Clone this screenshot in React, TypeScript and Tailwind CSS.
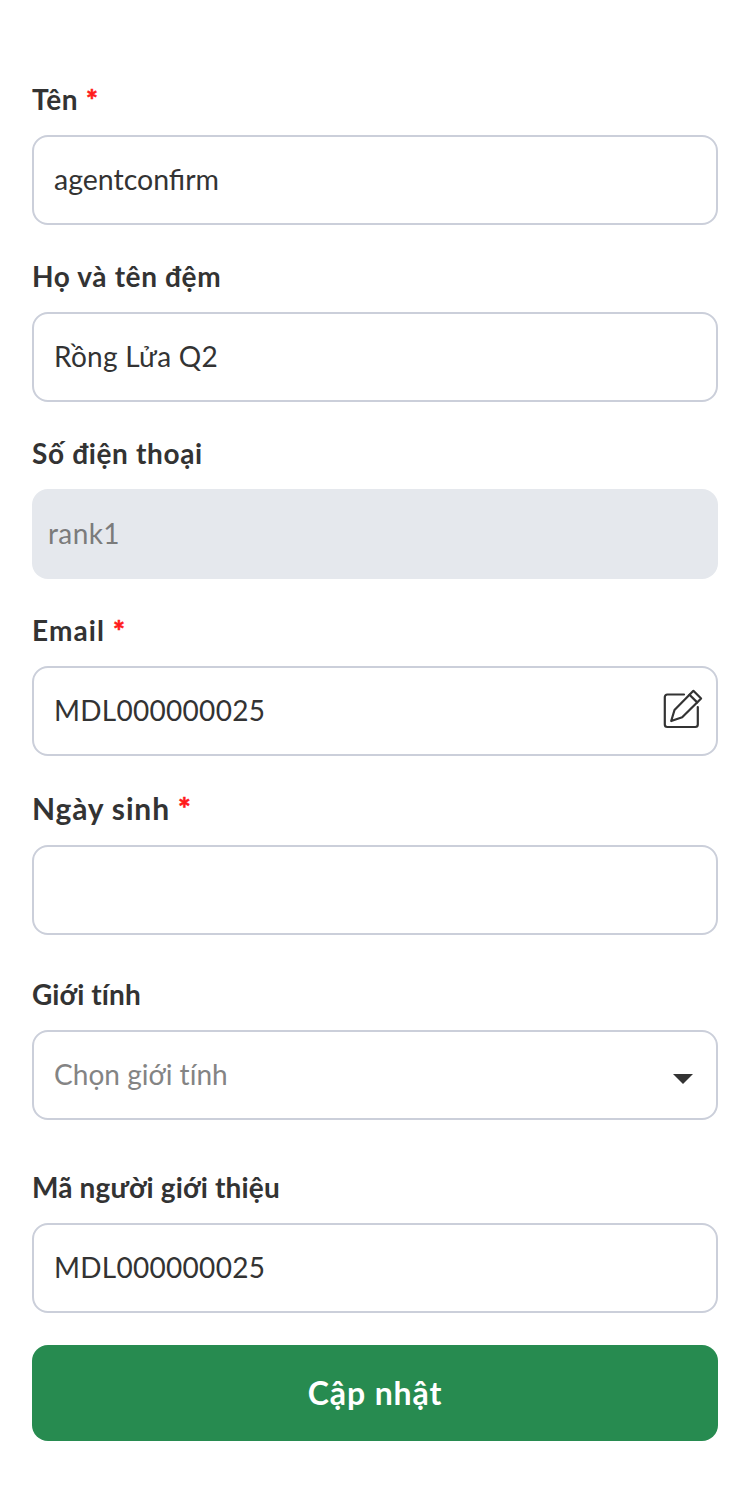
import type { ReactNode } from "react";

const box = "flex h-[90px] w-full items-center rounded-[16px] border-2 border-[#cbcfda] bg-white pb-[2px] pl-5 text-[28px] text-[#333333]";

function Label({ children, className = "text-[28px]", required = false }: { children: ReactNode; className?: string; required?: boolean }) {
  return (
    <label className={`mb-4 flex h-[38px] items-center gap-2 pb-[2px] font-bold whitespace-pre text-[#333333] ${className}`}>
      <span>{children}</span>
      {required && <span className="font-black tracking-normal text-[#ff1a1a] [-webkit-text-stroke:0.5px_#ff1a1a]">*</span>}
    </label>
  );
}

function EditIcon() {
  return (
    <svg width="40" height="40" viewBox="0 0 40 40" fill="none" stroke="#333333" strokeWidth="2.2" strokeLinejoin="round" strokeLinecap="round">
      <path d="M21 5.5H4.3a2.5 2.5 0 0 0-2.5 2.5V35.5a2.5 2.5 0 0 0 2.5 2.5h28a2.5 2.5 0 0 0 2.5-2.5V18" />
      <path d="M8.2 32l3.3-11L30.4 1.8l7.7 7.7L19.2 28.2 8.2 32Z" />
      <path d="M26.5 5.7l7.7 7.7" />
    </svg>
  );
}

export default function App() {
  return (
    <form className="flex min-h-[1505px] w-full flex-col bg-white px-8 pt-[81px] font-['Lato','Noto_Sans',sans-serif]">
      <div>
        <Label required className="text-[28px] tracking-[0.4px]">Tên</Label>
        <div className={box}><span className="text-[28.5px]">agentconfirm</span></div>
      </div>
      <div className="mt-[33px]">
        <Label className="text-[28px] tracking-[0.64px]">Họ và tên đệm</Label>
        <div className={box}><span className="tracking-[0.28px]">Rồng Lửa Q2</span></div>
      </div>
      <div className="mt-[33px]">
        <Label className="text-[28px] tracking-[0.65px]">Số điện thoại</Label>
        <div className="flex h-[90px] w-full items-center rounded-[16px] bg-[#e5e8ed] pb-[2px] pl-4 text-[28px] text-[#7b7b7b]"><span className="tracking-[0.4px]">rank1</span></div>
      </div>
      <div className="mt-[33px]">
        <Label required className="text-[28px] tracking-[1.1px]">Email</Label>
        <div className={`${box} justify-between pr-[13px]`}>
          <span className="tracking-[0.28px]">MDL000000025</span>
          <button type="button" aria-label="Edit" className="mb-[2px]"><EditIcon /></button>
        </div>
      </div>
      <div className="mt-[35px]">
        <Label required className="pb-[4px] text-[30px] tracking-[0.85px]">Ngày sinh</Label>
        <div className={box} />
      </div>
      <div className="mt-[41px]">
        <Label className="text-[28px] tracking-[0.1px]">Giới tính</Label>
        <div className={`${box} justify-between pr-[23px]`}>
          <span className="tracking-[0.03px] text-[#848484]">Chọn giới tính</span>
          <svg className="mt-[10px]" width="20" height="10" viewBox="0 0 20 10"><path d="M0 0h20L10 10Z" fill="#333333" /></svg>
        </div>
      </div>
      <div className="mt-[49px]">
        <Label className="text-[28px] tracking-[0.17px]">Mã người giới thiệu</Label>
        <div className={box}><span className="tracking-[0.28px]">MDL000000025</span></div>
      </div>
      <button type="submit" className="mt-8 flex h-24 w-full items-center justify-center rounded-[16px] bg-[#278b50] text-[32px] font-bold tracking-[0.9px] text-white">
        Cập nhật
      </button>
    </form>
  );
}
